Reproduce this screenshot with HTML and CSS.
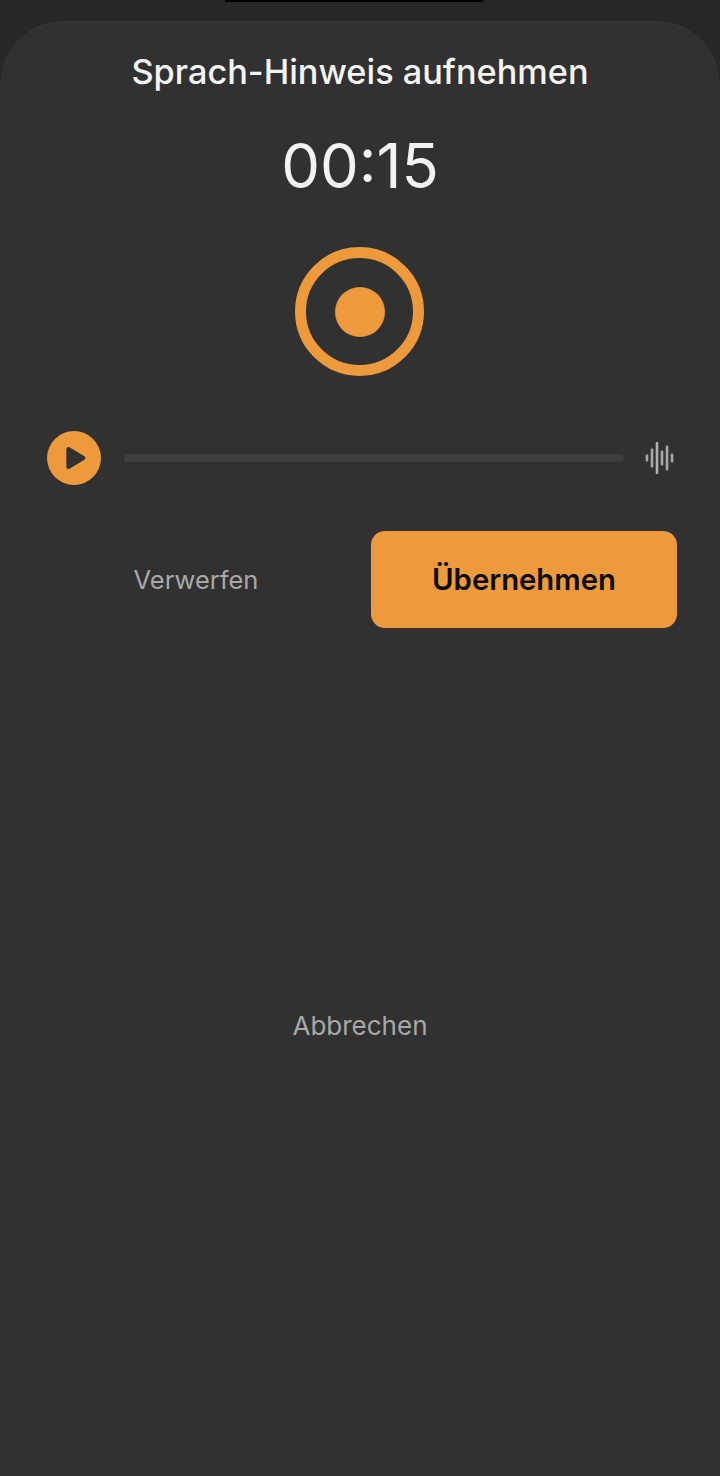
FILE: index.html
```html
<!DOCTYPE html>
<html lang="de">
<head>
    <meta charset="UTF-8">
    <meta name="viewport" content="width=device-width, initial-scale=1.0">
    <title>Sprach-Hinweis aufnehmen</title>
    <link rel="stylesheet" href="styles.css">
</head>
<body>
    <div class="notch"></div>
    <div class="sheet">
        <h2 class="title">Sprach-Hinweis aufnehmen</h2>
        <div class="timer">00:15</div>
        <div class="record"><span class="record-dot"></span></div>

        <div class="player">
            <div class="play">
                <svg width="54" height="54" viewBox="0 0 54 54">
                    <path d="M19.400 18a2 2 0 0 1 3-1.700L37.400 25.300a2 2 0 0 1 0 3.400L22.400 37.700a2 2 0 0 1-3-1.700z" fill="#313131"/>
                </svg>
            </div>
            <div class="track"></div>
            <svg class="wave" width="30" height="34" viewBox="0 0 30 34">
                <rect x="0.700" y="13.500" width="2.600" height="7" rx="1" fill="#a8a8a8"/>
                <rect x="5.700" y="7.500" width="2.600" height="19" rx="1" fill="#a8a8a8"/>
                <rect x="10.700" y="1" width="2.600" height="32" rx="1" fill="#b0b0b0"/>
                <rect x="15.700" y="9.500" width="2.600" height="15" rx="1" fill="#a8a8a8"/>
                <rect x="20.700" y="4.500" width="2.600" height="25" rx="1" fill="#a8a8a8"/>
                <rect x="25.700" y="12.500" width="2.600" height="9" rx="1" fill="#a8a8a8"/>
            </svg>
        </div>

        <div class="actions">
            <div class="discard">Verwerfen</div>
            <button class="accept">Übernehmen</button>
        </div>

        <div class="cancel">Abbrechen</div>
    </div>
</body>
</html>
```

FILE: styles.css
```css
html, body {
    height: 100%;
}
body {
    margin: 0;
    background-color: #272727;
    font-family: Inter, "Liberation Sans", sans-serif;
    display: flex;
    flex-direction: column;
    overflow: hidden;
}
.notch {
    width: 258px;
    height: 2px;
    margin: 0 0 19px 225px;
    background-color: #000;
    flex-shrink: 0;
}
.sheet {
    flex: 1;
    background-color: #313131;
    border-radius: 64px 64px 0 0;
    box-shadow: inset 0 1px 1px rgba(255, 255, 255, 0.03);
    display: flex;
    flex-direction: column;
    align-items: center;
}
.title {
    margin: 30px 0 0;
    font-size: 34.300px;
    line-height: 42px;
    font-weight: 500;
    color: #f4f4f4;
}
.timer {
    margin-top: 38px;
    font-size: 61.500px;
    line-height: 70px;
    font-weight: 400;
    color: #f2f2f2;
}
.record {
    margin: 46px 1px 0 0;
    width: 129px;
    height: 129px;
    box-sizing: border-box;
    border: 11px solid #ec9a3c;
    border-radius: 50%;
    display: flex;
    justify-content: center;
    align-items: center;
}
.record-dot {
    width: 50px;
    height: 50px;
    border-radius: 50%;
    background-color: #ec9a3c;
}
.player {
    align-self: stretch;
    margin-top: 55px;
    padding: 0 45px 0 47px;
    display: flex;
    align-items: center;
}
.play {
    width: 54px;
    height: 54px;
    border-radius: 50%;
    background-color: #ec9a3c;
    display: flex;
    flex-shrink: 0;
}
.track {
    flex: 1;
    height: 8px;
    margin: 0 21px 0 23px;
    border-radius: 4px;
    background-color: #3e3e3e;
}
.wave {
    flex-shrink: 0;
}
.actions {
    align-self: stretch;
    margin-top: 46px;
    padding-right: 43px;
    display: flex;
    align-items: center;
    justify-content: space-between;
}
.discard {
    width: 371px;
    box-sizing: border-box;
    padding-left: 21px;
    text-align: center;
    font-size: 25.500px;
    color: #a8a8a8;
}
.accept {
    width: 306px;
    height: 97px;
    border: none;
    border-radius: 14px;
    background-color: #ec9a3c;
    color: #0a0a0a;
    font-family: inherit;
    font-size: 29.300px;
    font-weight: 600;
}
.cancel {
    margin-top: 382px;
    font-size: 26px;
    line-height: 32px;
    color: #a8a8a8;
}
```
